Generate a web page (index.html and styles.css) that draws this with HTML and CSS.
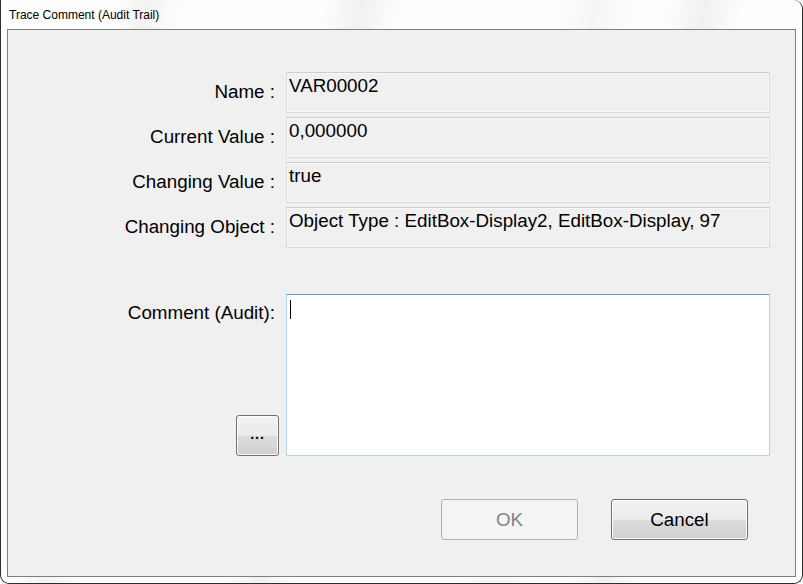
FILE: index.html
```html
<!DOCTYPE html>
<html lang="en">
<head>
  <meta charset="UTF-8" />
  <title>Trace Comment (Audit Trail)</title>
  <link rel="stylesheet" href="styles.css">
</head>
<body>
  <div class="window">
    <div class="titlebar">Trace Comment (Audit Trail)</div>
    <div class="client">
      <div class="form">
        <div class="row">
          <div class="label">Name :</div>
          <div class="field">VAR00002</div>
        </div>
        <div class="row">
          <div class="label">Current Value :</div>
          <div class="field">0,000000</div>
        </div>
        <div class="row">
          <div class="label">Changing Value :</div>
          <div class="field">true</div>
        </div>
        <div class="row">
          <div class="label">Changing Object :</div>
          <div class="field">Object Type : EditBox-Display2, EditBox-Display, 97</div>
        </div>
        <div class="row comment-row">
          <div class="label-col">
            <div class="label top">Comment (Audit):</div>
            <button class="btn small">...</button>
          </div>
          <div class="comment"><span class="caret"></span></div>
        </div>
      </div>
      <div class="actions">
        <button class="btn" disabled>OK</button>
        <button class="btn">Cancel</button>
      </div>
    </div>
  </div>
</body>
</html>
```

FILE: styles.css
```css
body {
  margin: 0;
  background: #fff;
  font-family: "Liberation Sans", Arial, sans-serif;
}
.window {
  width: 803px;
  height: 584px;
  box-sizing: border-box;
  border: 1px solid #2e2e2e;
  border-top: none;
  border-radius: 0 9px 9px 9px;
  padding: 0 6px 6px 6px;
  background:
    linear-gradient(100deg, transparent 0%, transparent 13%, rgba(0,0,0,0.045) 16%, transparent 20%,
      transparent 36%, rgba(0,0,0,0.05) 40%, transparent 44%,
      transparent 62%, rgba(0,0,0,0.03) 66%, transparent 70%,
      transparent 74%, rgba(0,0,0,0.05) 78%, transparent 82%),
    #fdfdfd;
  display: flex;
  flex-direction: column;
}
.titlebar {
  height: 29px;
  box-sizing: border-box;
  padding: 8px 0 0 2px;
  font-size: 12px;
  color: #000;
  line-height: 14px;
}
.client {
  flex: 1;
  border: 1px solid #7f7f7f;
  background: #f0f0f0;
  padding: 42px 0 0 0;
  display: flex;
  flex-direction: column;
}
.form {
  display: flex;
  flex-direction: column;
  gap: 4px;
}
.row {
  display: flex;
  gap: 7px;
}
.label {
  width: 267px;
  padding-right: 4px;
  text-align: right;
  font-size: 18.8px;
  color: #000;
  align-self: center;
  padding-bottom: 2px;
}
.field {
  width: 484px;
  height: 41px;
  box-sizing: border-box;
  border: 1px solid #dadada;
  border-top-color: #cdcdcd;
  box-shadow: inset 1px 1px 0 #f8f8f8, inset -1px -1px 0 #f8f8f8;
  background: #f0f0f0;
  padding: 2px 0 0 2px;
  font-size: 18.8px;
  line-height: 21px;
  color: #000;
  white-space: nowrap;
}
.comment-row {
  margin-top: 42px;
}
.label-col {
  width: 271px;
  display: flex;
  flex-direction: column;
  align-items: flex-end;
  justify-content: space-between;
}
.label.top {
  align-self: stretch;
  width: auto;
  padding-top: 8px;
  padding-bottom: 0;
}
.comment {
  width: 484px;
  height: 162px;
  box-sizing: border-box;
  border: 1px solid #b7d3ee;
  border-top-color: #6b9cc9;
  background: #fff;
  padding: 5px 0 0 3px;
}
.caret {
  display: block;
  width: 1px;
  height: 19px;
  background: #000;
}
.btn {
  width: 137px;
  height: 41px;
  box-sizing: border-box;
  border: 1px solid #707070;
  border-radius: 3px;
  background: linear-gradient(#f2f2f2 0%, #ebebeb 50%, #dddddd 51%, #cfcfcf 100%);
  box-shadow: inset 0 0 0 1px #fcfcfc;
  font-family: "Liberation Sans", Arial, sans-serif;
  font-size: 18.8px;
  color: #000;
  padding: 0;
}
.btn:disabled {
  border-color: #adb2b5;
  background: #f4f4f4;
  box-shadow: none;
  color: #838383;
}
.btn.small {
  width: 43px;
  font-size: 14px;
  font-weight: bold;
  letter-spacing: 1px;
  padding-bottom: 4px;
}
.actions {
  display: flex;
  justify-content: flex-end;
  gap: 33px;
  margin-top: 43px;
  padding-right: 47px;
}
```
